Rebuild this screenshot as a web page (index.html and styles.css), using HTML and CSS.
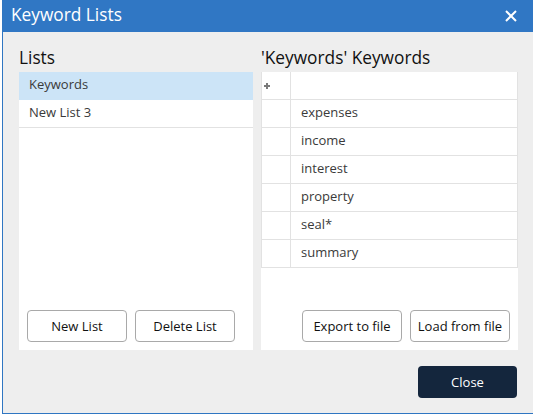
FILE: index.html
```html
<!DOCTYPE html>
<html>
<head>
<meta charset="utf-8">
<title>Keyword Lists</title>
<link rel="stylesheet" href="styles.css">
</head>
<body>
<div class="frame">
  <div class="titlebar">
    <span class="title">Keyword Lists</span>
    <svg class="close-x" width="12" height="12" viewBox="0 0 12 12"><path d="M1 1 L11 11 M11 1 L1 11" stroke="#fff" stroke-width="2" fill="none"/></svg>
  </div>
  <div class="content">
    <div class="columns">
      <div class="col">
        <div class="heading">Lists</div>
        <div class="panel">
          <div class="list">
            <div class="list-row selected">Keywords</div>
            <div class="list-row">New List 3</div>
          </div>
          <div class="btns">
            <button class="btn">New List</button>
            <button class="btn">Delete List</button>
          </div>
        </div>
      </div>
      <div class="col">
        <div class="heading">'Keywords' Keywords</div>
        <div class="panel">
          <div class="table">
            <div class="trow"><div class="tc first"><svg width="6" height="6" viewBox="0 0 6 6"><path d="M3 0 V6 M0 3 H6" stroke="#7a7a7a" stroke-width="2"/></svg></div><div class="tc"></div></div>
            <div class="trow"><div class="tc first"></div><div class="tc">expenses</div></div>
            <div class="trow"><div class="tc first"></div><div class="tc">income</div></div>
            <div class="trow"><div class="tc first"></div><div class="tc">interest</div></div>
            <div class="trow"><div class="tc first"></div><div class="tc">property</div></div>
            <div class="trow"><div class="tc first"></div><div class="tc">seal*</div></div>
            <div class="trow"><div class="tc first"></div><div class="tc">summary</div></div>
          </div>
          <div class="btns right">
            <button class="btn">Export to file</button>
            <button class="btn">Load from file</button>
          </div>
        </div>
      </div>
    </div>
    <div class="footer">
      <button class="close-btn">Close</button>
    </div>
  </div>
</div>
</body>
</html>
```

FILE: styles.css
```css
html, body {
  margin: 0;
  padding: 0;
  background: #ffffff;
}
body {
  font-family: "Open Sans", "Noto Sans", sans-serif;
  width: 533px;
  height: 415px;
  overflow: hidden;
}
.frame {
  margin-left: 2px;
  width: 530px;
  height: 413px;
  border-left: 1px solid #2f76c2;
  border-bottom: 1px solid #2f76c2;
  background: #eeeeee;
  display: flex;
  flex-direction: column;
}
.titlebar {
  height: 32px;
  background: #3077c4;
  display: flex;
  align-items: center;
  justify-content: space-between;
  padding: 0 16px 0 8px;
  box-sizing: border-box;
}
.title {
  color: #ffffff;
  font-size: 17.3px;
  line-height: 30px;
  padding-bottom: 2px;
}
.close-x {
  display: block;
  margin-top: -1px;
}
.content {
  flex: 1;
  display: flex;
  flex-direction: column;
  padding: 14px 15px 0 16px;
}
.columns {
  display: grid;
  grid-template-columns: 234px 257px;
  column-gap: 8px;
}
.col {
  display: flex;
  flex-direction: column;
}
.heading {
  font-size: 17.3px;
  line-height: 24px;
  margin-bottom: 2px;
  color: #111111;
}
.panel {
  background: #ffffff;
  height: 278px;
  display: flex;
  flex-direction: column;
  justify-content: space-between;
}
.list-row {
  font-size: 13px;
  line-height: 25px;
  box-sizing: border-box;
  padding: 0 10px 2px;
  height: 28px;
  border-bottom: 1px solid #e2e2e2;
  color: #3a3a3a;
}
.list-row.selected {
  background: #cce4f7;
  border-bottom-color: #cce4f7;
}
.btns {
  display: flex;
  gap: 8px;
  padding: 0 8px 8px;
}
.btns.right {
  justify-content: flex-end;
}
.btn {
  width: 100px;
  height: 32px;
  border: 1px solid #a9a9a9;
  border-radius: 4px;
  background: #ffffff;
  font-family: "Open Sans", "Noto Sans", sans-serif;
  font-size: 13px;
  color: #111111;
  padding: 0;
}
.table {
  display: flex;
  flex-direction: column;
  width: 257px;
}
.trow {
  display: flex;
  height: 28px;
  box-sizing: border-box;
  border-bottom: 1px solid #e2e2e2;
  border-left: 1px solid #e2e2e2;
  border-right: 1px solid #e2e2e2;
}
.tc {
  flex: 1;
  font-size: 13px;
  line-height: 25px;
  padding: 0 10px 2px;
  color: #3a3a3a;
}
.tc.first {
  flex: 0 0 29px;
  padding: 0;
  border-right: 1px solid #e2e2e2;
  display: flex;
  align-items: center;
  padding-left: 2px;
  box-sizing: border-box;
}
.tc.first svg {
  display: block;
  margin-top: 1px;
}
.footer {
  display: flex;
  justify-content: flex-end;
  padding-top: 16px;
}
.close-btn {
  width: 99px;
  height: 32px;
  margin-right: 1px;
  background: #14263d;
  color: #ffffff;
  border: 0;
  border-radius: 4px;
  font-family: "Open Sans", "Noto Sans", sans-serif;
  font-size: 13px;
}
```
